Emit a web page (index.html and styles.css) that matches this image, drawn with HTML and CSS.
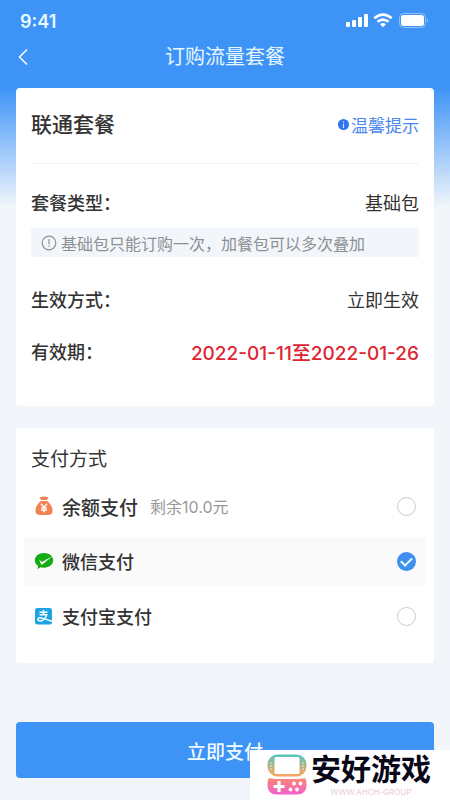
FILE: index.html
```html
<!DOCTYPE html>
<html lang="zh-CN">
<head>
<meta charset="utf-8">
<meta name="viewport" content="width=device-width, initial-scale=1">
<title>订购流量套餐</title>
<link rel="stylesheet" href="styles.css">
</head>
<body>
<div class="page">
  <div class="status">
    <span class="time">9:41</span>
    <svg class="status-icons" width="84" height="16" viewBox="0 0 84 16" fill="#fff" aria-hidden="true">
      <rect x="0" y="9" width="4" height="5" rx="1"/><rect x="6" y="7" width="4" height="7" rx="1"/><rect x="12" y="4" width="4" height="10" rx="1"/><rect x="18" y="1" width="4" height="13" rx="1"/>
      <g fill="none" stroke="#fff" stroke-width="2.6"><path d="M28.3 5.2Q37 -2 45.700 5.200"/><path d="M31.500 8.800Q37 4.300 42.500 8.800"/></g>
      <path d="M34 11.200Q37 8.900 40 11.200L37 14.200Z"/>
      <rect x="53.500" y=".5" width="26" height="14" rx="4" fill="none" stroke="#fff" stroke-opacity=".4"/>
      <rect x="55" y="2" width="23" height="11" rx="2.500"/><path d="M81 5.500q2 2 0 4z" opacity=".5"/>
    </svg>
  </div>
  <header class="nav">
    <button class="back" type="button" aria-label="返回"><svg width="10" height="18" viewBox="0 0 10 18" fill="none" stroke="#fff" stroke-width="1.500"><path d="M9 1.500 1.500 9 9 16.500"/></svg></button>
    <h1>订购流量套餐</h1>
  </header>
  <main>
    <section class="card plan">
      <div class="plan-head">
        <h2>联通套餐</h2>
        <a class="tips" href="#tips"><svg width="11" height="11" viewBox="0 0 11 11" aria-hidden="true"><circle cx="5.500" cy="5.500" r="5.500" fill="#2f74f0"/><path d="M5.500 2v1.300M5.500 4.500V9" stroke="#cfe0ff" stroke-width="1.200"/></svg>温馨提示</a>
      </div>
      <dl>
        <div class="row"><dt>套餐类型：</dt><dd>基础包</dd></div>
        <div class="hint"><svg width="16" height="16" viewBox="0 0 16 16" fill="none" stroke="#8c9094" stroke-width="1.200" aria-hidden="true"><circle cx="8" cy="8" r="6.800"/><path d="M8 4v5.500M8 10.800V12"/></svg>基础包只能订购一次，加餐包可以多次叠加</div>
        <div class="row"><dt>生效方式：</dt><dd>立即生效</dd></div>
        <div class="row"><dt>有效期：</dt><dd class="dates">2022-01-11至2022-01-26</dd></div>
      </dl>
    </section>
    <form class="pay" id="pay">
      <fieldset class="card methods">
        <legend>支付方式</legend>
        <label class="method balance">
          <svg width="20" height="20" viewBox="0 0 20 20" aria-hidden="true"><path d="M5.500 1.200Q10-.2 14.500 1.200L12.800 4H7.200Z" fill="#f28252"/><path d="M7 5h6c3.500 2.500 5.500 6 5.500 9.500 0 3-1.500 4.500-4.500 4.500H6c-3 0-4.500-1.500-4.500-4.500C1.500 11 3.500 7.500 7 5Z" fill="#f28252"/><path d="m7 7.800 3 3.400 3-3.400M10 11v5.500M7 11.800h6M7 14h6" fill="none" stroke="#fff" stroke-width="1.300"/></svg>
          <span class="name">余额支付</span><span class="left">剩余10.0元</span><input type="radio" name="method">
        </label>
        <label class="method chosen">
          <svg width="20" height="20" viewBox="0 0 20 20" aria-hidden="true"><path d="M10 2C4.800 2 .8 5.200.8 9.300c0 2.300 1.300 4.300 3.300 5.700L3.500 18l3.300-1.700c1 .3 2.100.4 3.200.4 5.200 0 9.200-3.200 9.200-7.400S15.200 2 10 2Z" fill="#13ad13"/><path d="m5 8.500 3 2.400L18.300 5.300 8.300 13.400c-.6.400-1 .2-1.300-.4Z" fill="#fff"/></svg>
          <span class="name">微信支付</span><input type="radio" name="method" checked>
        </label>
        <label class="method">
          <svg width="20" height="20" viewBox="0 0 20 20" aria-hidden="true"><rect x="1" y="2" width="17" height="16.500" rx="2.500" fill="#1ba3e2"/><path d="M5.500 6.200h8M9.500 4v4.500M5.500 8.700h7.300C12 12 9 15.200 5.800 15c-3-.3-2.500-3.300.2-3.300 3 0 6.500 2.300 12 3.600" fill="none" stroke="#fff" stroke-width="1.400"/></svg>
          <span class="name">支付宝支付</span><input type="radio" name="method">
        </label>
      </fieldset>
      <button class="submit" type="submit">立即支付</button>
    </form>
  </main>
  <aside class="brand">
    <svg width="40" height="41" viewBox="0 0 40 41" aria-hidden="true">
      <defs><linearGradient id="shell" gradientUnits="userSpaceOnUse" x1="0" y1="0" x2="0" y2="41"><stop stop-color="#4fc6c0"/><stop offset=".5" stop-color="#f7a860"/><stop offset=".65" stop-color="#fa8080"/><stop offset="1" stop-color="#f25fd0"/></linearGradient></defs>
      <rect x=".5" y=".5" width="39" height="22" rx="10" fill="url(#shell)"/>
      <rect x="7.500" y="3" width="25" height="17" rx="1.500" fill="#fff"/>
      <g fill="#fff" opacity=".8"><circle cx="4" cy="9" r=".8"/><circle cx="4" cy="12" r=".8"/><circle cx="4" cy="15" r=".8"/><circle cx="36" cy="9" r=".8"/><circle cx="36" cy="12" r=".8"/><circle cx="36" cy="15" r=".8"/></g>
      <path fill="url(#shell)" d="M2 24Q6 25 11 25H29Q34 25 38 24Q39.500 26 39.500 31Q39.500 40.500 30 40.500H10Q.5 40.500.5 31Q.5 26 2 24Z"/>
      <path d="M12 27v11M6.500 32.500h11" stroke="#fff" stroke-width="3.200"/><g fill="#fff"><circle cx="27" cy="29.500" r="1.900"/><circle cx="33.500" cy="29.500" r="1.900"/><circle cx="23.500" cy="35.500" r="1.900"/><circle cx="30" cy="35.500" r="1.900"/></g>
    </svg>
    <div class="brand-text"><strong>安好游戏</strong><small>WWW.AHCH-GROUP</small></div>
  </aside>
</div>
</body>
</html>
```
FILE: styles.css
```css
* { box-sizing: border-box; margin: 0; padding: 0; }
body { font-family: Inter, "Noto Sans CJK SC", sans-serif; color: #333; background: #f2f6fa; }
.page { position: relative; min-height: 100vh; background: linear-gradient(#3e93f7 88px, #f2f6fa 208px); }
.status { display: flex; justify-content: space-between; align-items: center; height: 40px; padding: 2px 20px 0; }
.time { font-size: 18px; font-weight: 600; color: #e8fbff; }
.nav { display: grid; grid-template-columns: 1fr auto 1fr; align-items: center; height: 48px; padding: 0 16px 14px; color: #e8f8ff; }
.nav h1 { font-size: 20px; line-height: 32px; font-weight: 400; }
.back { display: flex; width: 24px; padding: 0 2px; background: none; border: 0; }
main { padding: 0 16px 22px; }
.card { background: #fff; border: 0; border-radius: 4px; }
.plan { padding: 0 15px 29px; }
.plan-head { display: flex; justify-content: space-between; align-items: center; height: 76px; padding-bottom: 2px; border-bottom: 1px solid #f2f2f2; }
h2 { font-size: 21px; line-height: 28px; font-weight: 500; }
.tips { display: flex; align-items: center; gap: 2px; font-size: 17px; color: #4a86ee; text-decoration: none; }
dl { padding-top: 12px; }
.row { display: flex; justify-content: space-between; align-items: center; height: 52px; font-size: 18px; }
dt { font-weight: 500; }
.dates { color: #de2530; font-size: 19px; font-weight: 500; }
.hint { display: flex; align-items: center; gap: 4px; height: 29px; margin-bottom: 16px; padding-left: 10px; font-size: 16px; color: #8c9094; background: #f2f6fa; white-space: nowrap; }
.methods { margin-top: 22px; padding: 17px 8px 16px; }
legend { float: left; width: 100%; padding-left: 7px; font-size: 19px; line-height: 30px; }
.method { clear: both; display: flex; align-items: center; height: 62px; padding: 0 10px; font-size: 18px; }
.method.chosen { height: 48px; background: #fafafa; }
.name { margin-left: 8px; font-weight: 500; }
.balance .name { font-size: 19px; }
.left { margin-left: 12px; font-size: 16px; color: #999; }
input { appearance: none; width: 19px; height: 19px; margin-left: auto; border: 1px solid #ccc; border-radius: 50%; background: #fff; }
input:checked { display: grid; place-items: center; border: 0; background: #3e8ff0; }
input:checked::before { content: ""; width: 9px; height: 5px; border: solid #e8fbff; border-width: 0 0 2px 2px; transform: translateY(-1px) rotate(-45deg); }
.submit { display: block; width: 100%; height: 56px; margin-top: 59px; border: 0; border-radius: 4px; background: #3e93f7; color: #f0fbff; font: 500 19px Inter, "Noto Sans CJK SC", sans-serif; }
.brand { position: absolute; right: 0; bottom: 0; display: flex; align-items: center; gap: 4px; width: 200px; height: 50px; padding: 0 0 2px 17px; background: #fff; }
.brand-text { display: flex; flex-direction: column; align-items: center; }
.brand strong { font-size: 30px; line-height: 36px; font-weight: 700; color: #080818; }
.brand small { font-size: 8px; line-height: 10px; color: #e8cfcf; }
```
